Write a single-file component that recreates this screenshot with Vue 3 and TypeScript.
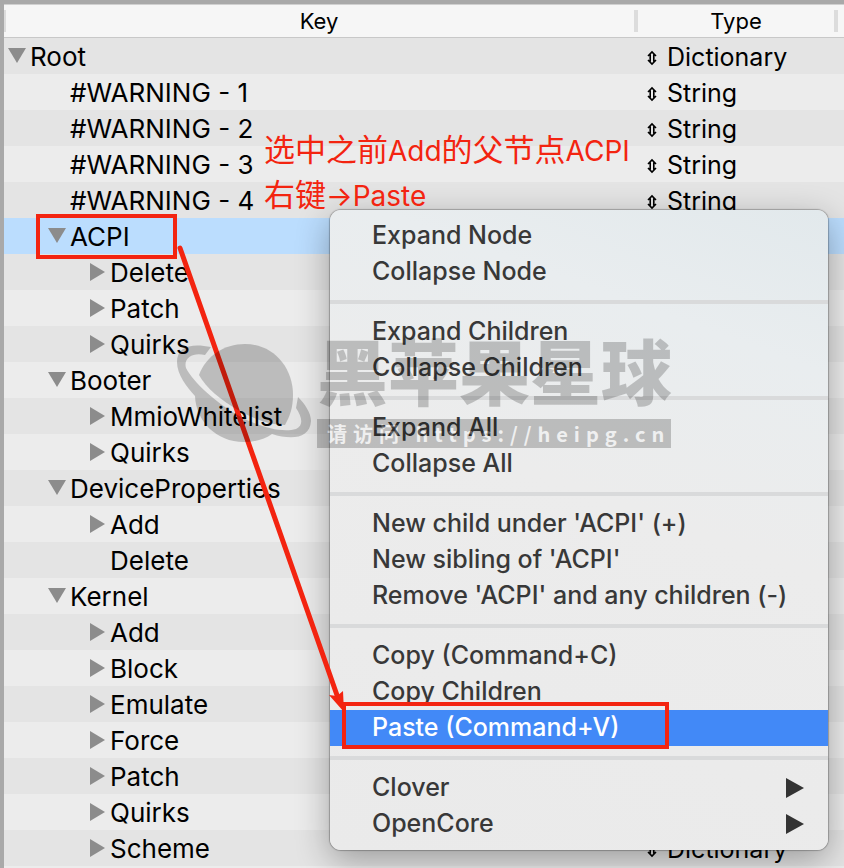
<script setup lang="ts">
import { ref } from 'vue'

interface PlistRow {
  key: string
  type?: string
  depth: number
  state: 'open' | 'closed' | 'leaf'
}

interface MenuItem {
  label: string
  submenu?: boolean
}

const node = (key: string, depth: number, state: PlistRow['state'] = 'closed'): PlistRow => ({
  key,
  depth,
  state,
})
const text = (key: string): PlistRow => ({ key, type: 'String', depth: 1, state: 'leaf' })

const rows: PlistRow[] = [
  { key: 'Root', type: 'Dictionary', depth: 0, state: 'open' },
  text('#WARNING - 1'),
  text('#WARNING - 2'),
  text('#WARNING - 3'),
  text('#WARNING - 4'),
  node('ACPI', 1, 'open'),
  node('Delete', 2),
  node('Patch', 2),
  node('Quirks', 2),
  node('Booter', 1, 'open'),
  node('MmioWhitelist', 2),
  node('Quirks', 2),
  node('DeviceProperties', 1, 'open'),
  node('Add', 2),
  node('Delete', 2, 'leaf'),
  node('Kernel', 1, 'open'),
  node('Add', 2),
  node('Block', 2),
  node('Emulate', 2),
  node('Force', 2),
  node('Patch', 2),
  node('Quirks', 2),
  { key: 'Scheme', type: 'Dictionary', depth: 2, state: 'closed' },
]

const groups: MenuItem[][] = [
  [{ label: 'Expand Node' }, { label: 'Collapse Node' }],
  [{ label: 'Expand Children' }, { label: 'Collapse Children' }],
  [{ label: 'Expand All' }, { label: 'Collapse All' }],
  [
    { label: "New child under 'ACPI' (+)" },
    { label: "New sibling of 'ACPI'" },
    { label: "Remove 'ACPI' and any children (-)" },
  ],
  [{ label: 'Copy (Command+C)' }, { label: 'Copy Children' }, { label: 'Paste (Command+V)' }],
  [
    { label: 'Clover', submenu: true },
    { label: 'OpenCore', submenu: true },
  ],
]

const selected = ref(5)
const active = ref('Paste (Command+V)')
</script>

<template>
  <main class="editor">
    <table class="plist">
      <colgroup>
        <col />
        <col class="col-type" />
        <col class="col-end" />
      </colgroup>
      <thead>
        <tr>
          <th scope="col">Key</th>
          <th scope="col">Type</th>
          <td></td>
        </tr>
      </thead>
      <tbody>
        <tr
          v-for="(row, i) in rows"
          :key="i"
          :class="{ selected: i === selected }"
          @click="selected = i"
        >
          <td>
            <div class="key" :class="'depth-' + row.depth">
              <button v-if="row.state !== 'leaf'" class="caret" :aria-label="'Toggle ' + row.key">
                <svg viewBox="0 0 20 20" width="20" height="20">
                  <path v-if="row.state === 'open'" d="M0 2H18L9 17Z" />
                  <path v-else d="M2 1V19L17 10Z" />
                </svg>
              </button>
              <span v-else class="caret"></span>
              <span class="label">{{ row.key }}</span>
            </div>
          </td>
          <td>
            <div v-if="row.type" class="type">
              <svg class="updown" viewBox="0 0 10 16" width="10" height="16">
                <path d="M1 6L5 2L9 6M1 10L5 14L9 10M3.200 4.500V11.500M6.800 4.500V11.500" />
              </svg>
              <span class="label">{{ row.type }}</span>
            </div>
          </td>
          <td></td>
        </tr>
      </tbody>
    </table>

    <nav class="menu" aria-label="Node actions">
      <ul v-for="(group, g) in groups" :key="g">
        <li v-for="item in group" :key="item.label">
          <button
            class="item"
            :class="{ active: item.label === active }"
            @mouseenter="active = item.label"
          >
            <span>{{ item.label }}</span>
            <svg v-if="item.submenu" viewBox="0 0 18 20" width="18" height="20">
              <path d="M0 0V20L18 10Z" />
            </svg>
          </button>
        </li>
      </ul>
    </nav>

    <p class="note">
      选中之前<span class="latin">Add</span>的父节点<span class="latin">ACPI</span><br />右键<span
        class="latin"
        >→Paste</span
      >
    </p>
    <div class="mark mark-node"></div>
    <div class="mark mark-paste"></div>
    <svg class="arrow" viewBox="0 0 180 490" width="180" height="490">
      <path class="shaft" d="M10 18L168 468" />
      <path class="head" d="M159 465L167 466L173 461L174 482Z" />
    </svg>

    <div class="watermark">
      <svg class="planet" viewBox="0 0 140 110" width="140" height="110">
        <path d="M27 40C34 21 52 9 73 9C101 9 121 32 121 60C121 72 118 81 113 90C98 90 82 84 66 75C49 65 34 53 27 40Z" />
        <path d="M39 12C20 8 5 11 5 27C5 40 15 52 23 61C24 86 44 107 72 107C83 107 93 104 100 99C119 105 138 104 139 86C139 78 133 69 126 62L124 73C130 82 132 90 124 94C110 98 88 92 69 82C44 68 21 47 14 33C11 22 22 17 33 20Z" />
      </svg>
      <div class="brand">
        <div class="name">黑苹果星球</div>
        <div class="site">请访问 https://heipg.cn</div>
      </div>
    </div>
  </main>
</template>

<style>
body {
  background: #ececec;
}
</style>

<style scoped>
.editor {
  position: relative;
  box-sizing: border-box;
  height: 100vh;
  overflow: hidden;
  border-top: 4px solid #a9a9a9;
  border-left: 4px solid #a9a9a9;
  background: #ececec;
  color: #000;
  font-family: Inter, "Noto Sans CJK SC", sans-serif;
  font-size: 25px;
  line-height: 36px;
}

.plist {
  width: 100%;
  table-layout: fixed;
  border-collapse: collapse;
}

.col-type {
  width: 200px;
}

.col-end {
  width: 6px;
}

.plist th,
.plist td {
  padding: 0;
  font-weight: 400;
}

thead tr {
  height: 34px;
  background: #f6f6f6;
  box-shadow: inset 0 -1px #c8c8c8, inset 0 1px #d0d0d0;
}

.plist th {
  padding-right: 4px;
  background: linear-gradient(#dcdcdc, #dcdcdc) right center / 4px 22px no-repeat;
  font-size: 22px;
  line-height: 34px;
}

.plist th:first-child {
  background:
    linear-gradient(#dcdcdc, #dcdcdc) right center / 4px 22px no-repeat,
    linear-gradient(#dcdcdc, #dcdcdc) left center / 2px 22px no-repeat;
}

tbody tr {
  height: 36px;
}

tbody tr:nth-child(odd) {
  background: #e4e4e4;
}

tbody tr.selected {
  background: #bbddfe;
}

.key,
.type {
  display: flex;
  align-items: center;
  height: 36px;
  white-space: nowrap;
}

.key {
  padding-left: 4px;
  font-size: 26px;
}

.key.depth-1 {
  padding-left: 44px;
}

.key.depth-2 {
  padding-left: 84px;
}

.label {
  padding-top: 2px;
}

.caret {
  display: flex;
  width: 22px;
  height: 20px;
  padding: 0;
  border: 0;
  background: none;
}

.caret svg {
  flex: none;
  fill: #8c8c8c;
}

.type {
  gap: 10px;
  padding-left: 9px;
}

.updown {
  margin-top: 4px;
  fill: none;
  stroke: #000;
  stroke-width: 1.6;
}

.menu {
  position: absolute;
  top: 206px;
  left: 326px;
  width: 498px;
  padding: 8px 0;
  box-sizing: border-box;
  border-radius: 11px;
  background: linear-gradient(200deg, #e2e9ec, #e9edef 20%, #ececec 45%, #eaeaea);
  box-shadow: 0 0 1px 1px rgba(0, 0, 0, 0.25), 0 10px 34px rgba(0, 0, 0, 0.32);
}

.menu ul {
  margin: 0;
  padding: 0;
  list-style: none;
}

.menu ul + ul::before {
  content: "";
  display: block;
  height: 4px;
  margin: 10px 0;
  background: #d9dadb;
}

.item {
  display: flex;
  align-items: center;
  justify-content: space-between;
  width: 100%;
  height: 36px;
  padding: 0 24px 0 42px;
  border: 0;
  background: none;
  color: #383838;
  font: inherit;
  font-weight: 450;
  text-align: left;
  white-space: nowrap;
}

.item span {
  padding-bottom: 2px;
}

.item svg {
  fill: #333;
}

.item.active {
  background: #4289f7;
  color: #fff;
}

.note {
  position: absolute;
  top: 124px;
  left: 260px;
  margin: 0;
  color: #f32410;
  font-size: 31px;
  line-height: 43px;
  white-space: nowrap;
}

.latin {
  font-size: 28px;
}

.mark {
  position: absolute;
  box-sizing: border-box;
  border: 4px solid #f32410;
}

.mark-node {
  top: 210px;
  left: 32px;
  width: 141px;
  height: 45px;
}

.mark-paste {
  top: 698px;
  left: 338px;
  width: 327px;
  height: 47px;
}

.arrow {
  position: absolute;
  top: 226px;
  left: 166px;
  pointer-events: none;
}

.shaft {
  fill: none;
  stroke: #f32410;
  stroke-width: 5;
  stroke-linecap: round;
}

.head {
  fill: #f32410;
}

.watermark {
  position: absolute;
  top: 331px;
  left: 168px;
  display: flex;
  gap: 5px;
  opacity: 0.2;
  pointer-events: none;
}

.planet {
  flex: none;
}

.brand {
  width: 354px;
  font-family: "Noto Sans CJK SC", sans-serif;
}

.name {
  height: 84px;
  font-size: 71px;
  font-weight: 900;
  line-height: 66px;
  white-space: nowrap;
}

.site {
  height: 29px;
  padding-left: 10px;
  background: #000;
  color: #fff;
  font-size: 20px;
  font-weight: 700;
  letter-spacing: 6px;
  line-height: 29px;
  white-space: nowrap;
}
</style>
